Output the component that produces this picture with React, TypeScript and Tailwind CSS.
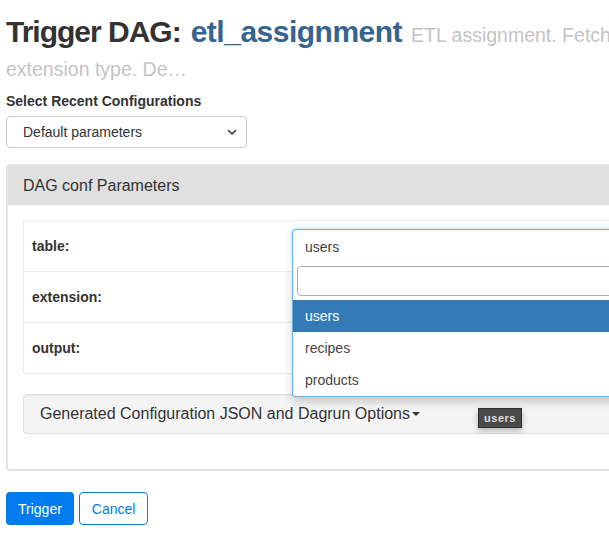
const options = ["users", "recipes", "products"];

function ChevronDown() {
  return (
    <svg width="10" height="7" viewBox="0 0 10 7" fill="none">
      <path d="M1.5 1.5 5 5l3.5-3.5" stroke="#333" strokeWidth="1.6" strokeLinecap="round" strokeLinejoin="round" />
    </svg>
  );
}

function TableSelect() {
  return (
    <div className="relative">
      <div className="flex h-[34px] items-center rounded-t-[4px] border border-b-0 border-[#66afe9] bg-white px-[12px] text-[#444] shadow-[0_0_6px_rgba(102,175,233,0.45)]">
        users
      </div>
      <div className="absolute left-0 right-0 top-[34px] z-10 rounded-b-[4px] border border-t-0 border-[#66afe9] bg-white shadow-[0_5px_10px_rgba(0,0,0,0.18)]">
        <div className="px-[4px] pb-[4px] pt-[3px]">
          <div className="h-[30px] rounded-[4px] border border-[#aaa] bg-white" />
        </div>
        {options.map((opt, i) => (
          <div
            className={
              i === 0
                ? "flex h-[32px] items-center bg-[#337ab7] px-[12px] text-white"
                : "flex h-[32px] items-center px-[12px] text-[#444]"
            }
            key={opt}
          >
            {opt}
          </div>
        ))}
      </div>
    </div>
  );
}

export default function App() {
  return (
    <div className="h-[544px] w-[609px] overflow-hidden bg-white font-['Liberation_Sans',Arial,sans-serif] text-[14px] leading-[20px] text-[#333]">
      <div className="w-[900px] pl-[6px] pt-[15px]">
        <h2 className="whitespace-nowrap text-[30px]">
          <div className="flex h-[33px] items-baseline leading-[33px]">
            <span className="font-bold tracking-[-1px] text-[#333]">Trigger DAG:</span>
            <span className="ml-[10px] font-bold tracking-[-0.5px] text-[#36648e]">etl_assignment</span>
            <span className="ml-[9px] text-[19.5px] text-[#c4c4c4]">
              ETL assignment. Fetches records from the source API for a given table and
            </span>
          </div>
          <div className="h-[33px] pt-[5px] text-[19.5px] leading-[33px] text-[#c4c4c4]">extension type. De…</div>
        </h2>

        <label className="mb-[5px] mt-[10px] block font-bold">Select Recent Configurations</label>
        <div className="flex h-[32px] w-[241px] items-center justify-between rounded-[4px] border border-[#ccc] pl-[16px] pr-[9px]">
          <span>Default parameters</span>
          <ChevronDown />
        </div>

        <section className="mt-[16px] rounded-[4px] border-2 border-[#e4e4e4]">
          <div className="flex h-[39px] items-center bg-[#e0e0e0] px-[15px] text-[16px]">DAG conf Parameters</div>
          <div className="p-[15px]">
            <div className="border border-[#ebebeb]">
              <div className="grid h-[50px] grid-cols-[268px_1fr]">
                <div className="flex items-center pl-[8px] font-bold">table:</div>
                <div className="pr-[8px] pt-[8px]">
                  <TableSelect />
                </div>
              </div>
              <div className="grid h-[51px] grid-cols-[268px_1fr] border-t border-[#ebebeb]">
                <div className="flex items-center pl-[8px] font-bold">extension:</div>
                <div />
              </div>
              <div className="grid h-[51px] grid-cols-[268px_1fr] border-t border-[#ebebeb]">
                <div className="flex items-center pl-[8px] font-bold">output:</div>
                <div />
              </div>
            </div>

            <div className="relative mb-[20px] mt-[20px] flex h-[40px] items-center rounded-[4px] border border-[#e0e0e0] bg-[#f4f4f4] pl-[16px] text-[16px] shadow-[inset_0_1px_1px_rgba(0,0,0,0.05)]">
              Generated Configuration JSON and Dagrun Options
              <span className="ml-[2px] inline-block h-0 w-0 border-x-[4px] border-t-[4px] border-x-transparent border-t-[#333]" />
              <div className="absolute left-[454px] top-[13px] flex h-[20px] w-[44px] items-center justify-center border border-[#2f2f2f] bg-[#4a4a4a] text-[11px] font-bold tracking-[0.5px] text-[#ddd] shadow-[0_3px_6px_rgba(0,0,0,0.25)]">
                users
              </div>
            </div>
          </div>
        </section>

        <div className="mt-[21px] flex gap-[5px]">
          <button className="h-[33px] rounded-[4px] bg-[#017cee] px-[12px] text-white" type="button">
            Trigger
          </button>
          <button className="h-[33px] rounded-[4px] border border-[#017cee] bg-white px-[12px] text-[#017cee]" type="button">
            Cancel
          </button>
        </div>
      </div>
    </div>
  );
}
